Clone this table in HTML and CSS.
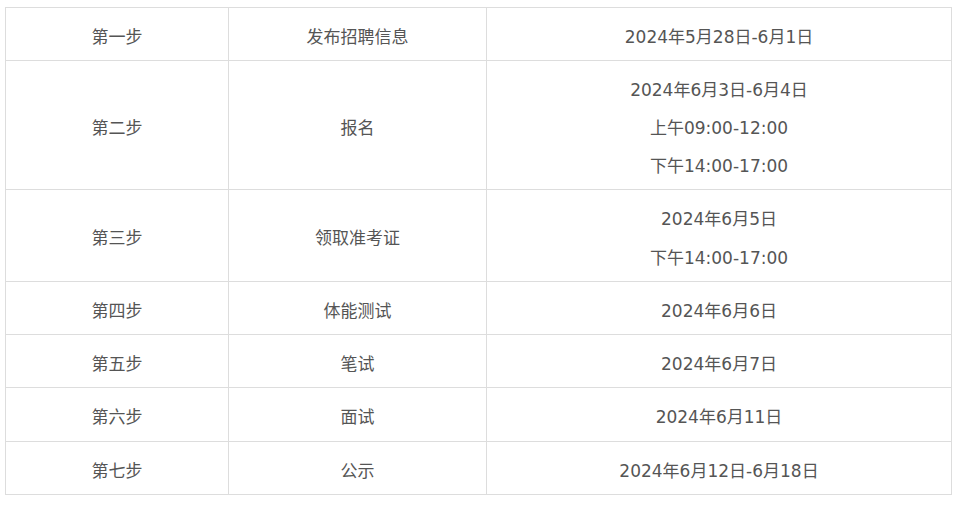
FILE: index.html
```html
<!DOCTYPE html>
<html lang="zh-CN">
<head>
<meta charset="utf-8">
<link rel="stylesheet" href="styles.css">
</head>
<body>
<table class="schedule">
  <colgroup>
    <col class="c1"><col class="c2"><col class="c3">
  </colgroup>
  <tbody>
    <tr><td>第一步</td><td>发布招聘信息</td><td>2024年5月28日-6月1日</td></tr>
    <tr><td>第二步</td><td>报名</td><td>2024年6月3日-6月4日<br>上午09:00-12:00<br>下午14:00-17:00</td></tr>
    <tr class="tall"><td>第三步</td><td>领取准考证</td><td>2024年6月5日<br>下午14:00-17:00</td></tr>
    <tr><td>第四步</td><td>体能测试</td><td>2024年6月6日</td></tr>
    <tr><td>第五步</td><td>笔试</td><td>2024年6月7日</td></tr>
    <tr class="plus"><td>第六步</td><td>面试</td><td>2024年6月11日</td></tr>
    <tr><td>第七步</td><td>公示</td><td>2024年6月12日-6月18日</td></tr>
  </tbody>
</table>
</body>
</html>
```
FILE: styles.css
```css
html, body { background: #fff; }
body {
  margin: 7px 0 0 5px;
  font-family: "DejaVu Sans", "Noto Sans CJK SC", sans-serif;
  font-size: 17px;
  color: #555;
}
.schedule {
  border-collapse: collapse;
  width: 946px;
  table-layout: fixed;
}
.c1 { width: 223px; }
.c2 { width: 258px; }
.c3 { width: 465px; }
.schedule td {
  border: 1px solid #ddd;
  text-align: center;
  vertical-align: middle;
  padding: 10px 0 4px;
  line-height: 38px;
}
.schedule .tall td { line-height: 38.5px; }
.schedule .plus td { padding-bottom: 5px; }
```
